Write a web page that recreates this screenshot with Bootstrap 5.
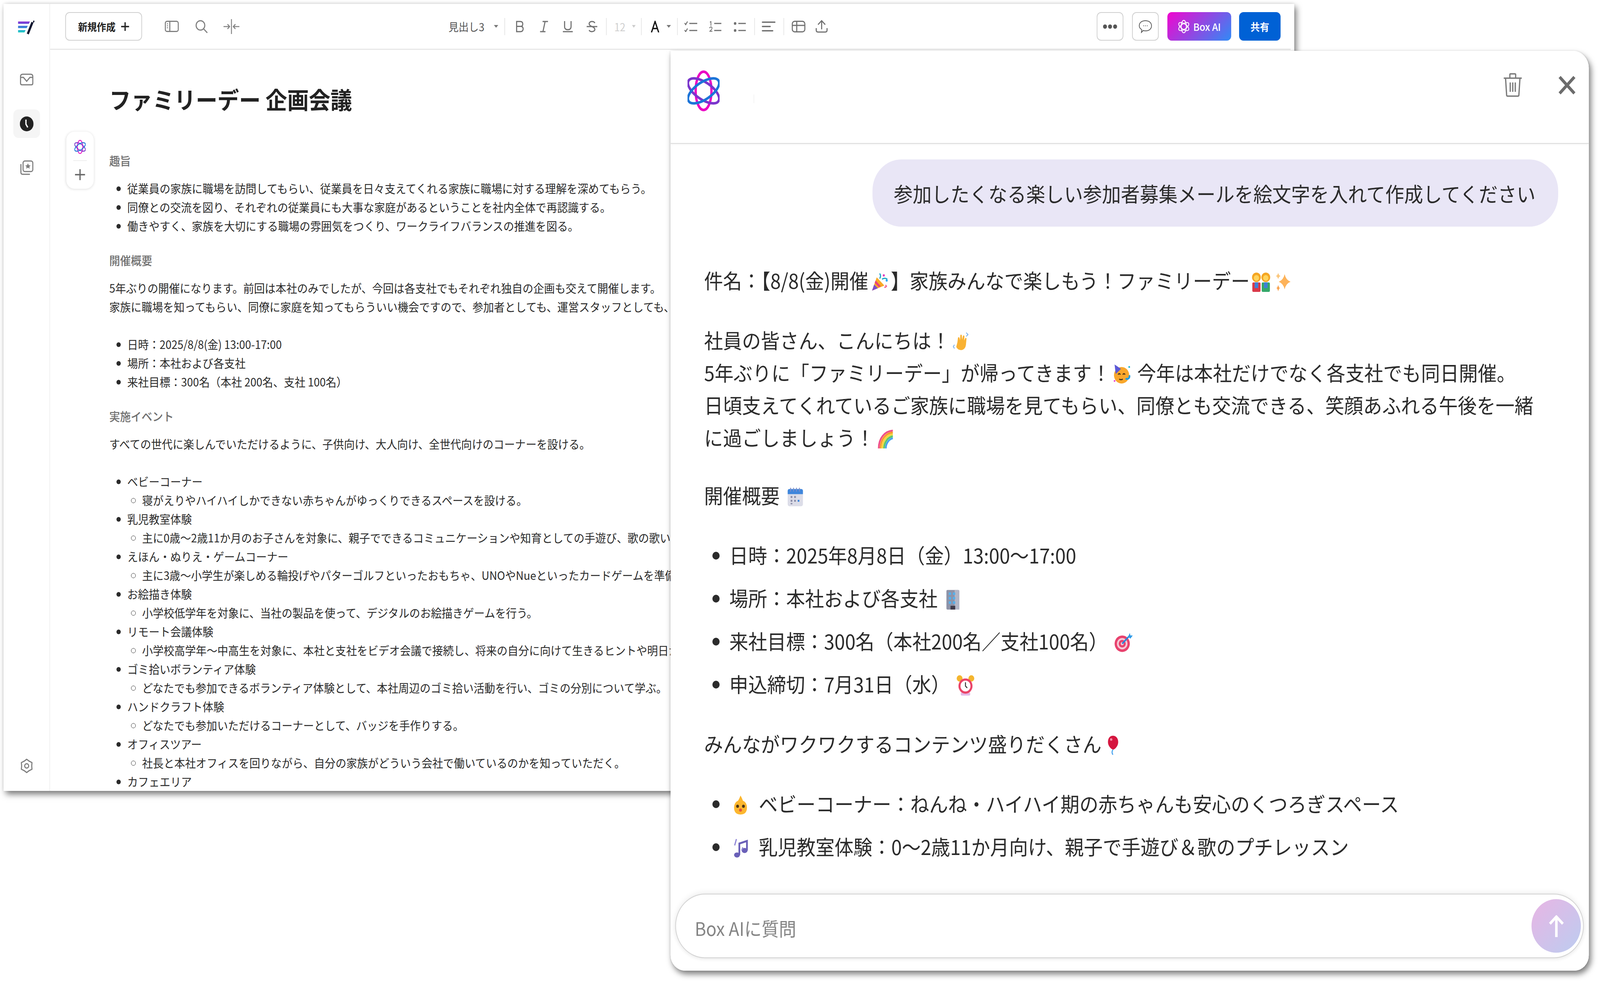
<!DOCTYPE html>
<html lang="ja"><head><meta charset="utf-8"><title>ファミリーデー 企画会議</title>
<link href="https://cdn.jsdelivr.net/npm/bootstrap@5.3.0/dist/css/bootstrap.min.css" rel="stylesheet">
<style>
html,body{margin:0;background:#fff;overflow:hidden;height:2513px}
body{font-family:"Noto Sans CJK JP","Noto Sans",sans-serif;color:#222}
.stage{width:4438px;height:2513px;position:relative;overflow:hidden;transform-origin:0 0}
.win-doc{position:absolute;left:10px;top:10px;width:3580px;height:2014px;background:#fff;overflow:hidden}
.shad-doc{position:absolute;left:10px;top:10px;width:3580px;height:2014px;box-shadow:6px 8px 16px rgba(0,0,0,.55),0 -2px 8px rgba(0,0,0,.08)}
.win-ai{position:absolute;left:1860px;top:130px;width:2547px;height:2354px;background:#fff;border-radius:0 44px 40px 40px;overflow:hidden}
.shad-ai{position:absolute;left:1860px;top:130px;width:2547px;height:2354px;border-radius:0 44px 40px 40px;box-shadow:5px 9px 16px rgba(0,0,0,.5),0 0 6px rgba(0,0,0,.1)}
.side-rail{width:129px;flex:0 0 129px;border-right:2px solid #efefef;padding-top:42px;padding-bottom:45px}
.rail-i{display:block}
.rail-first{margin-top:100px}
.rail-on{width:74px;height:73px;background:#f5f5f5;border-radius:14px;margin-top:61px;margin-bottom:57px}
.tb{height:117px;margin-right:10px;padding-left:42px;padding-right:28px;border-bottom:2px solid #dfdfdf;flex:0 0 auto}
.btn-new{width:213px;height:73px;border:2px solid #cfcfcf;border-radius:12px;background:#fff;font-size:26px;font-weight:700;color:#222;padding:0;gap:14px}
.tb-g1{margin-left:52px;gap:23px}
.slot-a{width:60px}
.slot-b{width:48px}
.tb-head{width:105px;margin-left:572px;font-size:28px;color:#555;white-space:nowrap;line-height:1}
.caret-s{width:0;height:0;border-left:6px solid transparent;border-right:6px solid transparent;border-top:7px solid #777}
.caret-l{border-top-color:#ccc;border-left-width:5px;border-right-width:5px}
.tb-sep{width:2px;height:44px;background:#e6e6e6}
.m-21{margin-left:21px}.m-17{margin-left:17px}.m-15{margin-left:15px}.m-18{margin-left:18px}.m-25{margin-left:25px}.m-20{margin-left:20px}.m-12{margin-left:12px}.m-16{margin-left:16px}.m-14{margin-left:14px}.m-28{margin-left:28px}
.gap-fmt{gap:18.6px}.gap-lst{gap:20px}
.tb-size{width:31px;font-size:28px;color:#cfcfcf;line-height:1}
.tb-a{width:24px}
.btn-sq{width:74px;height:73px;border:2px solid #cfcfcf;border-radius:12px;background:#fff;padding:0}
.btn-ai{width:177px;height:73px;border-radius:12px;background:linear-gradient(135deg,#f205cf,#2f8bf6);color:#fff;font-size:26px;font-weight:500;gap:10px;border:0;padding:0}
.btn-share{width:115px;height:73px;border-radius:12px;background:#0061d5;color:#fff;font-size:26px;font-weight:700;border:0;padding:0;margin-left:-2px}
.tb-right{gap:24px}
.doc-pane{position:relative;padding:86px 0 0 164px;flex:1 1 auto;overflow:hidden;font-size:29.85px;line-height:48px;white-space:nowrap;color:#2a2a2a}
.doc-title{font-size:60px;line-height:80px;font-weight:700;margin:0 0 93px;color:#222}
.doc-h{font-size:29.85px;line-height:48px;font-weight:500;color:#6f6f6f;margin:0 0 23px}
.doc-p{margin:0}
.doc-ul{margin:0 0 40px;padding-left:50px}
.doc-ul ul{margin:0;padding-left:41px;list-style:circle}
.empty-line{height:48px}
.float-tools{position:absolute;left:45px;top:210px;width:76px;height:146px;background:#fff;border-radius:22px;box-shadow:0 1px 8px rgba(0,0,0,.14);padding-top:21px}
.float-rule{width:38px;height:2px;background:#eee;margin:16px 0 21px}
.ai-head{height:238px;flex:0 0 238px;border-bottom:2px solid #dcdcdc;box-shadow:0 2px 4px rgba(0,0,0,.05);padding-left:47px;padding-right:37px;position:relative}
.ai-logo{margin-top:50px}
.ai-cursor{width:2px;height:22px;background:#f3f3f3;margin:112px 0 0 94px}
.ai-trash{margin-top:57px;margin-right:101px}
.ai-x{margin-top:64px}
.ai-body{flex:1 1 auto;overflow:hidden;min-height:0;padding:40px 0 0 93px;font-size:52.5px;line-height:83px;color:#2b2b2b;white-space:nowrap}
.ask{height:172px;border-radius:80px;background:#e9e6f6;margin:0 85px 95px auto;width:1902px;padding-left:59px;font-size:52.5px;line-height:1}
.ai-p{margin:0 0 70px}
.ai-p-tight{margin-bottom:65px}
.ai-ul{margin:0 0 70px;padding-left:70px}
.ai-ul li{margin-bottom:27px}
.emj{width:52px;height:52px;vertical-align:-8px;display:inline-block;margin:0 5px}
.emj-lead{margin-right:13px}
.ai-foot{flex:0 0 auto;background:#fff;padding:0 14px 32px 13px;box-shadow:0 -14px 24px rgba(255,255,255,.95)}
.ask-box{height:165px;border:2px solid #d2d2d2;border-radius:83px;background:#fff;box-shadow:0 -3px 16px rgba(0,0,0,.07),0 4px 10px rgba(0,0,0,.05);padding:0 6px 0 52px}
.ask-ph{font-size:48px;color:#858585;line-height:1;padding-top:8px}
.send-c{width:137px;height:137px;border-radius:50%;background:linear-gradient(135deg,#e8b5e4,#bccdf0)}
</style></head>
<body>
<svg width="0" height="0" class="d-block" aria-hidden="true"><defs>
<symbol id="atom" viewBox="0 0 89 105"><g fill="none" stroke-width="6.5">
<ellipse cx="44.500" cy="52.500" rx="22" ry="49" stroke="#ea06c4"/>
<ellipse cx="44.500" cy="52.500" rx="22" ry="49" stroke="#7a35cc" transform="rotate(-58 44.500 52.500)"/>
<ellipse cx="44.500" cy="52.500" rx="22" ry="49" stroke="#1c74d8" transform="rotate(58 44.500 52.500)"/>
</g></symbol>
<symbol id="atomw" viewBox="0 0 89 105"><g fill="none" stroke="#fff" stroke-width="7">
<ellipse cx="44.500" cy="52.500" rx="22" ry="49"/>
<ellipse cx="44.500" cy="52.500" rx="22" ry="49" transform="rotate(-58 44.500 52.500)"/>
<ellipse cx="44.500" cy="52.500" rx="22" ry="49" transform="rotate(58 44.500 52.500)"/>
</g></symbol>
<symbol id="e-party" viewBox="0 0 32 32"><path d="M3 30 11 9l13 13z" fill="#f9a825"/><path d="M6.500 20.500 3 30l10-3.800z" fill="#7c4dca"/><path d="M9 14l9 9-3.500 1.500-7-7z" fill="#e8427a"/><circle cx="23" cy="6" r="1.800" fill="#e040c0"/><circle cx="28" cy="14" r="1.800" fill="#2fa8f0"/><path d="M16 3q3 4 0 8M20 12q5-3 9 0" stroke="#1ea7c9" stroke-width="2" fill="none"/><path d="M26 21l2 3M24 25l3-1" stroke="#f06292" stroke-width="2"/></symbol>
<symbol id="e-pair" viewBox="0 0 32 32"><rect x="1" y="17" width="14" height="15" rx="2" fill="#d93a4a"/><rect x="17" y="17" width="14" height="15" rx="2" fill="#35a86a"/><rect x="5" y="17" width="6" height="9" fill="#3f7fd8"/><rect x="21" y="17" width="6" height="9" fill="#3f7fd8"/><circle cx="8" cy="9" r="7.500" fill="#f5a623"/><circle cx="24" cy="9" r="7.500" fill="#f5a623"/><circle cx="8" cy="10" r="4.500" fill="#ffd45c"/><circle cx="24" cy="10" r="4.500" fill="#ffd45c"/></symbol>
<symbol id="e-spark" viewBox="0 0 32 32"><path d="M18 4q2 9 10 12-8 3-10 12-2-9-10-12 8-3 10-12z" fill="#fdb35a"/><path d="M7 2q1 4 4 5-3 1-4 5-1-4-4-5 3-1 4-5z" fill="#fbc77c"/><path d="M7 21q1 4 3 5-2 1-3 5-1-4-3-5 2-1 3-5z" fill="#f9a24d"/></symbol>
<symbol id="e-wave" viewBox="0 0 32 32"><path d="M9 17l1-7q1-2 2.500 0l1 4 .5-8q1-2 2.500 0l.5 7 1.500-6q1.500-1.500 2.500.5l-.5 7 2-4q1.500-1 2 1l-1 10q-1 7-8 8-6 0-8.500-5z" fill="#f9b233"/><path d="M24 2l3 3-3 3M4 21l-2 3 2 3" stroke="#7fb5ee" stroke-width="1.500" fill="none"/></symbol>
<symbol id="e-face" viewBox="0 0 32 32"><circle cx="16" cy="18" r="13" fill="#f9a72b"/><path d="M4 1l11 7L6 16z" fill="#5b58d6"/><path d="M10 17q2-3 4 0M18 17q2-3 4 0" stroke="#4b3418" stroke-width="1.800" fill="none"/><path d="M23 23a4 4 0 0 0 6-5" stroke="#1f9be0" stroke-width="3" fill="none"/><path d="M12 24q3 2 6 0" stroke="#4b3418" stroke-width="1.800" fill="none"/><circle cx="4" cy="27" r="1.500" fill="#e84dd0"/><circle cx="29" cy="5" r="1.500" fill="#22b8cf"/></symbol>
<symbol id="e-rain" viewBox="0 0 32 32"><g fill="none" stroke-width="3"><path d="M4 31C4 15 14 4 28 3" stroke="#f0508a"/><path d="M7 31C7 17 16 7 28 6" stroke="#f79b2e"/><path d="M10 31C10 19 18 10 28 9" stroke="#f6d53c"/><path d="M13 31C13 21 20 13 28 12" stroke="#5fc86a"/><path d="M16 31C16 23 22 16 28 15" stroke="#4aa3ee"/></g></symbol>
<symbol id="e-cal" viewBox="0 0 32 32"><rect x="3" y="4" width="26" height="27" rx="3" fill="#dcdde8"/><path d="M3 12V7q0-3 3-3h20q3 0 3 3v5z" fill="#3f86dc"/><path d="M8 2v6M13 2v6M18 2v6M23 2v6" stroke="#7e8cc8" stroke-width="1.500"/><g fill="#8b8ea8"><rect x="8" y="15" width="3" height="3"/><rect x="14" y="15" width="3" height="3"/><rect x="8" y="21" width="3" height="3"/><rect x="14" y="21" width="3" height="3"/><rect x="8" y="26" width="3" height="2"/></g><rect x="20" y="21" width="3" height="3" fill="#3f86dc"/></symbol>
<symbol id="e-bld" viewBox="0 0 32 32"><rect x="5" y="1" width="22" height="31" rx="2" fill="#8e93a8"/><path d="M19 1h6q2 0 2 2v29h-8z" fill="#b3b6c6"/><g fill="#57b0ea"><rect x="9" y="5" width="4" height="4"/><rect x="16" y="5" width="4" height="4"/><rect x="9" y="12" width="4" height="4"/><rect x="16" y="12" width="4" height="4"/><rect x="9" y="19" width="4" height="4"/><rect x="16" y="19" width="4" height="4"/></g><rect x="12" y="26" width="8" height="6" fill="#3f3b4a"/></symbol>
<symbol id="e-tgt" viewBox="0 0 32 32"><circle cx="14" cy="18" r="13" fill="#e8426e"/><circle cx="14" cy="18" r="9" fill="#f6c8d6"/><circle cx="14" cy="18" r="6" fill="#e8426e"/><circle cx="14" cy="18" r="2.500" fill="#f6c8d6"/><path d="M14 18 27 5" stroke="#2b86d9" stroke-width="2.500"/><path d="M24 7l3-6 1 4 4 0-4 5z" fill="#2f9be8"/></symbol>
<symbol id="e-alarm" viewBox="0 0 32 32"><circle cx="6" cy="5" r="5" fill="#f4b52e"/><circle cx="26" cy="5" r="5" fill="#f4b52e"/><rect x="8" y="27" width="16" height="5" rx="2" fill="#e3b9e6"/><circle cx="16" cy="17" r="12" fill="#ea4468"/><circle cx="16" cy="17" r="8.500" fill="#fff"/><path d="M16 11v6l3 3" stroke="#333" stroke-width="1.600" fill="none"/></symbol>
<symbol id="e-ball" viewBox="0 0 32 32"><path d="M16 1c6 0 9 5 9 10 0 6-5 11-8.500 12-4-1-9-6-9-12C7.500 6 10 1 16 1z" fill="#d5163f"/><path d="M16 23q-3 4 0 8" stroke="#4aa3ee" stroke-width="1.800" fill="none"/><circle cx="13" cy="7" r="2" fill="#f58ca5"/></symbol>
<symbol id="e-baby" viewBox="0 0 32 32"><path d="M16 1q3 5 4 8 7 3 7 11 0 11-11 11T5 20q0-8 7-11 2-3 4-8z" fill="#fcb72f"/><circle cx="11" cy="18" r="2.400" fill="#4b3418"/><circle cx="21" cy="18" r="2.400" fill="#4b3418"/><circle cx="16" cy="24" r="2.500" fill="#e2543f"/></symbol>
<symbol id="e-note" viewBox="0 0 32 32"><g fill="#6a60b8"><ellipse cx="10" cy="27" rx="5" ry="4"/><ellipse cx="23" cy="20" rx="5" ry="4"/></g><path d="M14 27V9l13-4v15" stroke="#6a60b8" stroke-width="3" fill="none"/><path d="M6 12 9 2M18 20l2-5" stroke="#8f86d6" stroke-width="2"/></symbol>
</defs></svg>

<div class="stage" id="stage">
<div class="shad-doc"></div>
<section class="win-doc d-flex">
 <aside class="side-rail d-flex flex-column align-items-center">
  <svg class="rail-i" width="47" height="36" viewBox="0 0 47 36"><defs><linearGradient id="lg1" x1="0" y1="0" x2="0" y2="1"><stop offset="0" stop-color="#8d2fd6"/><stop offset=".5" stop-color="#3d7fd9"/><stop offset="1" stop-color="#1fcfc4"/></linearGradient></defs><path d="M0 3h33l-3 6H0zM0 14h27l-3 6H0zM0 25h21l-3 6H0z" fill="url(#lg1)"/><path d="M40 5 27 35" stroke="#10162f" stroke-width="6"/><path d="M43 0l3 2-2 4-3-1z" fill="#10162f"/></svg>
  <svg class="rail-i rail-first" width="38" height="31" viewBox="0 0 38 31" fill="none" stroke="#7d7d7d" stroke-width="3"><path d="M8 2h22q6 0 6 6v17q0 4-4 4H6q-4 0-4-4V8q0-6 6-6z"/><path d="M2 10h8l9 10 9-10h8"/></svg>
  <div class="rail-on d-flex align-items-center justify-content-center"><svg width="38" height="38" viewBox="0 0 38 38"><circle cx="19" cy="19" r="19" fill="#222"/><path d="M17 8v12l5 8" stroke="#fff" stroke-width="3.500" fill="none"/></svg></div>
  <svg class="rail-i" width="38" height="38" viewBox="0 0 38 38" fill="none" stroke="#7d7d7d" stroke-width="3"><rect x="9" y="2" width="27" height="27" rx="5"/><path d="M3 10v21q0 5 5 5h20"/><path d="M22.500 8l2.500 5 5 .5-3.700 3.300 1 5-4.800-2.800-4.800 2.800 1-5-3.700-3.300 5-.5z" fill="#7d7d7d" stroke="none"/></svg>
  <svg class="rail-i mt-auto" width="38" height="38" viewBox="0 0 38 38" fill="none" stroke="#7d7d7d" stroke-width="3"><path d="M19 2 26 6.900 33.700 10.500 33 19 33.700 27.500 26 31.100 19 36 12 31.100 4.300 27.500 5 19 4.300 10.500 12 6.900z" stroke-linejoin="round"/><circle cx="19" cy="19" r="5.500"/></svg>
 </aside>
 <div class="flex-grow-1 d-flex flex-column min-w-0">
  <header class="tb d-flex align-items-center">
   <button type="button" class="btn btn-new d-flex align-items-center justify-content-center">新規作成<svg width="24" height="24" viewBox="0 0 24 24"><path d="M12 1v22M1 12h22" stroke="#222" stroke-width="3.500"/></svg></button>
   <div class="d-flex align-items-center tb-g1">
    <div class="slot-a d-flex justify-content-center"><svg width="39" height="29" viewBox="0 0 39 29" fill="none" stroke="#808080" stroke-width="3"><rect x="1.500" y="1.500" width="36" height="26" rx="5"/><path d="M14 2v25"/><path d="M6 8h3M6 13h3M6 18h3" stroke-width="2.500"/></svg></div>
    <div class="slot-a d-flex justify-content-center"><svg width="36" height="34" viewBox="0 0 36 34" fill="none" stroke="#808080" stroke-width="3"><circle cx="15" cy="14" r="12"/><path d="M24 23l10 10"/></svg></div>
    <div class="slot-a d-flex justify-content-center"><svg width="46" height="38" viewBox="0 0 46 38" fill="none" stroke="#808080" stroke-width="2.500"><path d="M23 0v38"/><path d="M1 19h16M12 13l6 6-6 6M45 19H29M34 13l-6 6 6 6"/></svg></div>
   </div>
   <span class="tb-head">見出し3</span>
   <span class="caret-s m-21"></span><span class="tb-sep m-17"></span>
   <div class="d-flex align-items-center gap-fmt m-17">
    <div class="slot-b d-flex justify-content-center"><svg width="22" height="30" viewBox="0 0 22 30" fill="none" stroke="#707070" stroke-width="3"><path d="M2 2h10q7 0 7 6.500T12 14.500H2zM2 14.500h11q7 0 7 6.500t-7 7H2z"/></svg></div>
    <div class="slot-b d-flex justify-content-center"><svg width="24" height="30" viewBox="0 0 24 30" fill="none" stroke="#707070" stroke-width="3"><path d="M8 2h15M1 28h15M15 2 9 28"/></svg></div>
    <div class="slot-b d-flex justify-content-center"><svg width="28" height="30" viewBox="0 0 28 30" fill="none" stroke="#707070" stroke-width="3"><path d="M5 1v14q0 8 9 8t9-8V1M0 28h28"/></svg></div>
    <div class="slot-b d-flex justify-content-center"><svg width="30" height="30" viewBox="0 0 30 30" fill="none" stroke="#707070" stroke-width="3"><path d="M23 6q-2-4-8-4T7 7q0 5 8 8 8 3 8 7.500T15 28q-6 0-8-4M0 15h30"/></svg></div>
   </div>
   <span class="tb-sep m-15"></span>
   <span class="tb-size m-21">12</span><span class="caret-s caret-l m-18"></span><span class="tb-sep m-15"></span>
   <svg class="tb-a m-25" width="24" height="30" viewBox="0 0 24 30" fill="none" stroke="#111" stroke-width="3.500"><path d="M2 30 12 2l10 28M5 20h14"/></svg>
   <span class="caret-s m-20"></span><span class="tb-sep m-17"></span>
   <div class="d-flex align-items-center gap-lst m-12">
    <div class="slot-b d-flex justify-content-center"><svg width="36" height="28" viewBox="0 0 36 28" fill="none" stroke="#707070" stroke-width="2.500"><path d="M1 5l3 4 5-8M1 23l3 4 5-8"/><path d="M14 6h22M14 24h22" stroke-width="3"/></svg></div>
    <div class="slot-b d-flex justify-content-center"><svg width="34" height="28" viewBox="0 0 34 28" fill="none" stroke="#707070" stroke-width="2"><path d="M2 3l3-2v11M1 18q1-3 4-3t3 3-6 8h7"/><path d="M14 6h20M14 24h20" stroke-width="3"/></svg></div>
    <div class="slot-b d-flex justify-content-center"><svg width="34" height="28" viewBox="0 0 34 28" fill="#707070"><circle cx="4" cy="6" r="3.500"/><circle cx="4" cy="24" r="3.500"/><rect x="13" y="4.500" width="21" height="3"/><rect x="13" y="22.500" width="21" height="3"/></svg></div>
   </div>
   <span class="tb-sep m-16"></span>
   <div class="slot-b d-flex justify-content-center m-14"><svg width="38" height="26" viewBox="0 0 38 26" fill="#707070"><rect width="38" height="3.500" rx="1.700"/><rect y="11" width="25" height="3.500" rx="1.700"/><rect y="22" width="32" height="3.500" rx="1.700"/></svg></div>
   <span class="tb-sep m-17"></span>
   <svg class="m-21" width="38" height="30" viewBox="0 0 38 30" fill="none" stroke="#707070" stroke-width="3"><rect x="1.500" y="1.500" width="35" height="27" rx="7"/><path d="M1 12h36M14 2v27"/></svg>
   <svg class="m-28" width="34" height="33" viewBox="0 0 34 33" fill="none" stroke="#707070" stroke-width="3"><path d="M2 21v5q0 5 5 5h20q5 0 5-5v-5M17 24V3M7 12l10-10 10 10"/></svg>
   <div class="d-flex align-items-center tb-right ms-auto">
    <button type="button" class="btn btn-sq d-flex align-items-center justify-content-center"><svg width="40" height="12" viewBox="0 0 40 12" fill="#555"><circle cx="6" cy="6" r="5.500"/><circle cx="20" cy="6" r="5.500"/><circle cx="34" cy="6" r="5.500"/></svg></button>
    <button type="button" class="btn btn-sq d-flex align-items-center justify-content-center"><svg width="38" height="34" viewBox="0 0 38 34" fill="none" stroke="#555" stroke-width="2"><path d="M19 2c10 0 17 5 17 13s-7 13-16 13c-3 0-5 0-7-1l-5 5 1-7C4 22 2 19 2 15 2 7 9 2 19 2z"/><path d="M13 15h2M18 15h2M23 15h2" stroke-width="2"/></svg></button>
    <button type="button" class="btn btn-ai d-flex align-items-center justify-content-center"><svg width="33" height="34"><use href="#atomw"/></svg>Box AI</button>
    <button type="button" class="btn btn-share">共有</button>
   </div>
  </header>
  <main class="doc-pane">
   <h1 class="doc-title">ファミリーデー 企画会議</h1>
   <div class="float-tools d-flex flex-column align-items-center">
    <svg width="32" height="36"><use href="#atom"/></svg>
    <div class="float-rule"></div>
    <svg width="28" height="28" viewBox="0 0 28 28"><path d="M14 0v28M0 14h28" stroke="#666" stroke-width="3.500"/></svg>
   </div>
   <h2 class="doc-h">趣旨</h2>
   <ul class="doc-ul">
    <li>従業員の家族に職場を訪問してもらい、従業員を日々支えてくれる家族に職場に対する理解を深めてもらう。</li>
    <li>同僚との交流を図り、それぞれの従業員にも大事な家庭があるということを社内全体で再認識する。</li>
    <li>働きやすく、家族を大切にする職場の雰囲気をつくり、ワークライフバランスの推進を図る。</li>
   </ul>
   <h2 class="doc-h">開催概要</h2>
   <p class="doc-p">5年ぶりの開催になります。前回は本社のみでしたが、今回は各支社でもそれぞれ独自の企画も交えて開催します。</p>
   <p class="doc-p">家族に職場を知ってもらい、同僚に家庭を知ってもらういい機会ですので、参加者としても、運営スタッフとしても、</p>
   <div class="empty-line"></div>
   <ul class="doc-ul">
    <li>日時：2025/8/8(金) 13:00-17:00</li>
    <li>場所：本社および各支社</li>
    <li>来社目標：300名（本社 200名、支社 100名）</li>
   </ul>
   <h2 class="doc-h">実施イベント</h2>
   <p class="doc-p">すべての世代に楽しんでいただけるように、子供向け、大人向け、全世代向けのコーナーを設ける。</p>
   <div class="empty-line"></div>
   <ul class="doc-ul">
    <li>ベビーコーナー<ul><li>寝がえりやハイハイしかできない赤ちゃんがゆっくりできるスペースを設ける。</li></ul></li>
    <li>乳児教室体験<ul><li>主に0歳〜2歳11か月のお子さんを対象に、親子でできるコミュニケーションや知育としての手遊び、歌の歌い</li></ul></li>
    <li>えほん・ぬりえ・ゲームコーナー<ul><li>主に3歳〜小学生が楽しめる輪投げやパターゴルフといったおもちゃ、UNOやNueといったカードゲームを準備</li></ul></li>
    <li>お絵描き体験<ul><li>小学校低学年を対象に、当社の製品を使って、デジタルのお絵描きゲームを行う。</li></ul></li>
    <li>リモート会議体験<ul><li>小学校高学年〜中高生を対象に、本社と支社をビデオ会議で接続し、将来の自分に向けて生きるヒントや明日から</li></ul></li>
    <li>ゴミ拾いボランティア体験<ul><li>どなたでも参加できるボランティア体験として、本社周辺のゴミ拾い活動を行い、ゴミの分別について学ぶ。</li></ul></li>
    <li>ハンドクラフト体験<ul><li>どなたでも参加いただけるコーナーとして、バッジを手作りする。</li></ul></li>
    <li>オフィスツアー<ul><li>社長と本社オフィスを回りながら、自分の家族がどういう会社で働いているのかを知っていただく。</li></ul></li>
    <li>カフェエリア</li>
   </ul>
  </main>
 </div>
</section>

<div class="shad-ai"></div>
<section class="win-ai d-flex flex-column">
 <header class="ai-head d-flex align-items-start">
  <svg class="ai-logo" width="89" height="105"><use href="#atom"/></svg>
  <div class="ai-cursor"></div>
  <svg class="ai-trash ms-auto" width="52" height="61" viewBox="0 0 52 61" fill="none" stroke="#7a7a7a" stroke-width="3.500"><path d="M1 13h50M18 12V4q0-2 2-2h12q2 0 2 2v8M6 13l3 43q0 3 3 3h28q3 0 3-3l3-43M19 24v24M26 24v24M33 24v24"/></svg>
  <svg class="ai-x" width="47" height="48" viewBox="0 0 47 48" fill="none" stroke="#6c6c6c" stroke-width="8"><path d="M3 3l41 42M44 3 3 45"/></svg>
 </header>
 <div class="ai-body">
  <div class="ask d-flex align-items-center">参加したくなる楽しい参加者募集メールを絵文字を入れて作成してください</div>
  <p class="ai-p">件名：【8/8(金)開催<svg class="emj"><use href="#e-party"/></svg>】家族みんなで楽しもう！ファミリーデー<svg class="emj"><use href="#e-pair"/></svg><svg class="emj"><use href="#e-spark"/></svg></p>
  <p class="ai-p ai-p-tight">社員の皆さん、こんにちは！<svg class="emj"><use href="#e-wave"/></svg><br>5年ぶりに「ファミリーデー」が帰ってきます！<svg class="emj"><use href="#e-face"/></svg> 今年は本社だけでなく各支社でも同日開催。<br>日頃支えてくれているご家族に職場を見てもらい、同僚とも交流できる、笑顔あふれる午後を一緒<br>に過ごしましょう！<svg class="emj"><use href="#e-rain"/></svg></p>
  <p class="ai-p">開催概要 <svg class="emj"><use href="#e-cal"/></svg></p>
  <ul class="ai-ul">
   <li>日時：2025年8月8日（金）13:00〜17:00</li>
   <li>場所：本社および各支社 <svg class="emj"><use href="#e-bld"/></svg></li>
   <li>来社目標：300名（本社200名／支社100名） <svg class="emj"><use href="#e-tgt"/></svg></li>
   <li>申込締切：7月31日（水） <svg class="emj"><use href="#e-alarm"/></svg></li>
  </ul>
  <p class="ai-p">みんながワクワクするコンテンツ盛りだくさん<svg class="emj"><use href="#e-ball"/></svg></p>
  <ul class="ai-ul">
   <li><svg class="emj emj-lead"><use href="#e-baby"/></svg> ベビーコーナー：ねんね・ハイハイ期の赤ちゃんも安心のくつろぎスペース</li>
   <li><svg class="emj emj-lead"><use href="#e-note"/></svg> 乳児教室体験：0〜2歳11か月向け、親子で手遊び＆歌のプチレッスン</li>
  </ul>
 </div>
 <footer class="ai-foot">
  <div class="ask-box d-flex align-items-center justify-content-between">
   <span class="ask-ph">Box AIに質問</span>
   <span class="send-c d-flex align-items-center justify-content-center"><svg width="44" height="56" viewBox="0 0 44 56" fill="none" stroke="#fff" stroke-width="7"><path d="M22 56V4M4 22 22 4l18 18"/></svg></span>
  </div>
 </footer>
</section>
</div>
<script>document.getElementById('stage').style.transform='scaleX('+(Math.min(1,window.innerWidth/4438))+')';</script>
<script src="https://cdn.jsdelivr.net/npm/bootstrap@5.3.0/dist/js/bootstrap.bundle.min.js"></script>
</body></html>
